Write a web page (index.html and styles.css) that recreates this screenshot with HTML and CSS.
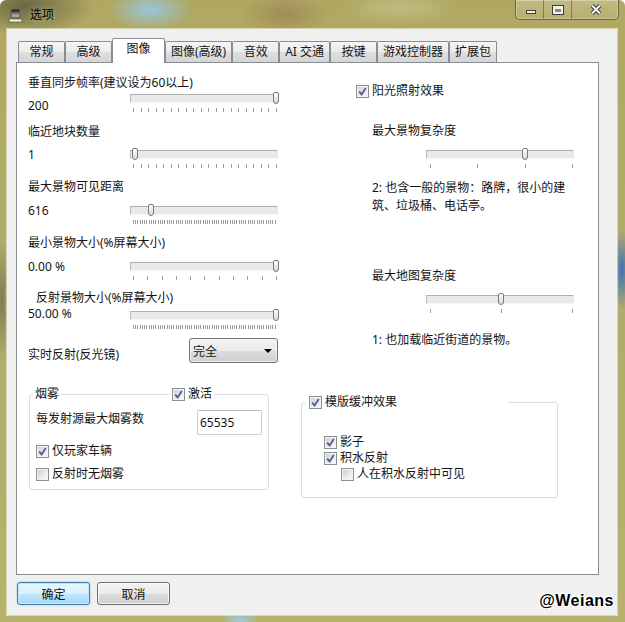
FILE: index.html
```html
<!DOCTYPE html>
<html lang="zh-CN">
<head>
    <meta charset="UTF-8">
    <title>选项</title>
    <link rel="stylesheet" href="styles.css">
</head>
<body>
    <div class="window">
        <div class="titlebar">
            <svg class="app-icon" width="15" height="15" viewBox="0 0 15 15">
                <rect x="3" y="1" width="9" height="4" rx="2" fill="#3b3b36"/>
                <rect x="2" y="4" width="11" height="6" rx="1" fill="#6d6b60"/>
                <rect x="4" y="6" width="7" height="3" fill="#a8a494"/>
                <rect x="1" y="11" width="13" height="3" fill="#f4f4ef" stroke="#55544c" stroke-width="0.8"/>
            </svg>
            <span class="title">选项</span>
            <div class="caption-buttons">
                <div class="cap-btn cap-min">
                    <svg width="27" height="19"><rect x="10.5" y="10.5" width="9" height="3" fill="#f2f2f2" stroke="#3c3c3c"/></svg>
                </div>
                <div class="cap-btn cap-max">
                    <svg width="27" height="19">
                        <rect x="8" y="5" width="12" height="10" fill="#3c3c3c"/>
                        <rect x="9" y="6" width="10" height="8" fill="#f2f2f2"/>
                        <rect x="11" y="9" width="6" height="3" fill="#8f8c63"/>
                    </svg>
                </div>
                <div class="cap-btn cap-close">
                    <svg width="46" height="19">
                        <path d="M20 5.5L28 13.5M28 5.5L20 13.5" stroke="#3c3c3c" stroke-width="4"/>
                        <path d="M20 5.5L28 13.5M28 5.5L20 13.5" stroke="#f2f2f2" stroke-width="2"/>
                    </svg>
                </div>
            </div>
        </div>

        <div class="client">
            <div class="tabs">
                <div class="tab">常规</div>
                <div class="tab">高级</div>
                <div class="tab active">图像</div>
                <div class="tab">图像(高级)</div>
                <div class="tab">音效</div>
                <div class="tab">AI 交通</div>
                <div class="tab">按键</div>
                <div class="tab">游戏控制器</div>
                <div class="tab">扩展包</div>
            </div>

            <div class="panel">
                <div class="columns">
                    <div class="col-left">
                        <div class="field first">
                            <div class="field-label">垂直同步帧率(建议设为60以上)</div>
                            <div class="field-row">
                                <span class="value">200</span>
                                <div class="slider">
                                    <div class="track"></div>
                                    <div class="thumb" style="left: 143px"></div>
                                    <div class="ticks"><i></i><i></i><i></i><i></i><i></i><i></i><i></i><i></i><i></i><i></i><i></i><i></i><i></i><i></i><i></i><i></i><i></i><i></i><i></i><i></i></div>
                                </div>
                            </div>
                        </div>

                        <div class="field">
                            <div class="field-label">临近地块数量</div>
                            <div class="field-row">
                                <span class="value">1</span>
                                <div class="slider">
                                    <div class="track"></div>
                                    <div class="thumb" style="left: 2px"></div>
                                    <div class="ticks"><i></i><i></i><i></i><i></i><i></i><i></i><i></i><i></i><i></i><i></i><i></i><i></i><i></i><i></i><i></i><i></i><i></i><i></i><i></i><i></i></div>
                                </div>
                            </div>
                        </div>

                        <div class="field">
                            <div class="field-label">最大景物可见距离</div>
                            <div class="field-row">
                                <span class="value">616</span>
                                <div class="slider">
                                    <div class="track"></div>
                                    <div class="thumb" style="left: 18px"></div>
                                    <div class="ticks dense"></div>
                                </div>
                            </div>
                        </div>

                        <div class="field">
                            <div class="field-label">最小景物大小(%屏幕大小)</div>
                            <div class="field-row">
                                <span class="value">0.00 %</span>
                                <div class="slider">
                                    <div class="track"></div>
                                    <div class="thumb" style="left: 143px"></div>
                                    <div class="ticks"><i></i><i></i><i></i><i></i><i></i><i></i><i></i><i></i><i></i><i></i><i></i></div>
                                </div>
                            </div>
                        </div>

                        <div class="field tight">
                            <div class="field-label indent">反射景物大小(%屏幕大小)</div>
                            <div class="field-row">
                                <span class="value">50.00 %</span>
                                <div class="slider">
                                    <div class="track"></div>
                                    <div class="thumb" style="left: 143px"></div>
                                    <div class="ticks dense"></div>
                                </div>
                            </div>
                        </div>

                        <div class="select-row">
                            <span class="select-label">实时反射(反光镜)</span>
                            <div class="dropdown">
                                <span>完全</span>
                                <svg width="8" height="4"><path d="M0 0H8L4 4Z" fill="#000"/></svg>
                            </div>
                        </div>
                    </div>

                    <div class="col-right">
                        <div class="check">
                            <span class="cb checked"><svg width="11" height="11"><path d="M2.2 5.6L4.6 8.4L8.8 2" fill="none" stroke="#4b5d97" stroke-width="1.8"/></svg></span>
                            <span>阳光照射效果</span>
                        </div>

                        <div class="right-label first">最大景物复杂度</div>
                        <div class="slider wide">
                            <div class="track"></div>
                            <div class="thumb" style="left: 96px"></div>
                            <div class="ticks"><i></i><i></i><i></i><i></i></div>
                        </div>
                        <div class="desc">2: 也含一般的景物<span class="punct">：</span>路牌<span class="punct">，</span>很小的建<br>筑、垃圾桶、电话亭。</div>

                        <div class="right-label second">最大地图复杂度</div>
                        <div class="slider wide">
                            <div class="track"></div>
                            <div class="thumb" style="left: 72px"></div>
                            <div class="ticks"><i></i><i></i><i></i></div>
                        </div>
                        <div class="desc last">1: 也加载临近街道的景物。</div>
                    </div>
                </div>

                <div class="groups">
                    <div class="group smoke">
                        <div class="group-caption">烟雾</div>
                        <div class="group-caption activate">
                            <span class="cb checked"><svg width="11" height="11"><path d="M2.2 5.6L4.6 8.4L8.8 2" fill="none" stroke="#4b5d97" stroke-width="1.8"/></svg></span>
                            <span>激活</span>
                        </div>
                        <div class="smoke-row">
                            <span class="smoke-label">每发射源最大烟雾数</span>
                            <div class="textbox">65535</div>
                        </div>
                        <div class="check spaced">
                            <span class="cb checked"><svg width="11" height="11"><path d="M2.2 5.6L4.6 8.4L8.8 2" fill="none" stroke="#4b5d97" stroke-width="1.8"/></svg></span>
                            <span>仅玩家车辆</span>
                        </div>
                        <div class="check spaced2">
                            <span class="cb"></span>
                            <span>反射时无烟雾</span>
                        </div>
                    </div>

                    <div class="group stencil">
                        <div class="group-caption stencil-caption">
                            <span class="cb checked"><svg width="11" height="11"><path d="M2.2 5.6L4.6 8.4L8.8 2" fill="none" stroke="#4b5d97" stroke-width="1.8"/></svg></span>
                            <span>模版缓冲效果</span>
                        </div>
                        <div class="check">
                            <span class="cb checked"><svg width="11" height="11"><path d="M2.2 5.6L4.6 8.4L8.8 2" fill="none" stroke="#4b5d97" stroke-width="1.8"/></svg></span>
                            <span>影子</span>
                        </div>
                        <div class="check">
                            <span class="cb checked"><svg width="11" height="11"><path d="M2.2 5.6L4.6 8.4L8.8 2" fill="none" stroke="#4b5d97" stroke-width="1.8"/></svg></span>
                            <span>积水反射</span>
                        </div>
                        <div class="check sub">
                            <span class="cb"></span>
                            <span>人在积水反射中可见</span>
                        </div>
                    </div>
                </div>
            </div>

            <div class="buttons">
                <div class="btn default">确定</div>
                <div class="btn">取消</div>
            </div>
        </div>

        <div class="watermark">@Weians</div>
    </div>
</body>
</html>
```

FILE: styles.css
```css
* {
    box-sizing: border-box;
}
body {
    margin: 0;
    font-family: "Noto Sans", "Noto Sans CJK SC", sans-serif;
    font-size: 12px;
    color: #141414;
}
.window {
    position: relative;
    width: 625px;
    height: 622px;
    display: flex;
    flex-direction: column;
    border-radius: 6px 6px 0 0;
    background:
        radial-gradient(ellipse 42px 20px at 150px 10px, rgba(150,200,228,.95), rgba(150,200,228,0)),
        radial-gradient(ellipse 70px 30px at 25px 6px, rgba(96,90,62,.85), rgba(96,90,62,0)),
        radial-gradient(ellipse 45px 22px at 285px 14px, rgba(150,122,80,.6), rgba(150,122,80,0)),
        radial-gradient(ellipse 60px 18px at 400px 8px, rgba(200,198,140,.7), rgba(200,198,140,0)),
        radial-gradient(ellipse 18px 8px at 240px 620px, rgba(150,205,235,.95), rgba(150,205,235,0)),
        radial-gradient(ellipse 10px 40px at 622px 270px, rgba(50,105,190,.9), rgba(50,105,190,0)),
        radial-gradient(ellipse 8px 60px at 2px 300px, rgba(110,100,70,.7), rgba(110,100,70,0)),
        linear-gradient(to bottom, #b0a862 0%, #b2ac6c 50%, #b7b16d 100%);
}
.titlebar {
    display: flex;
    align-items: flex-start;
    height: 29px;
    padding: 0 6px 0 8px;
}
.app-icon {
    margin-top: 8px;
}
.title {
    margin: 7px 0 0 7px;
    line-height: 16px;
    color: #000;
    text-shadow: 0 0 6px rgba(255,255,255,.5);
}
.caption-buttons {
    display: flex;
    margin-left: auto;
    height: 20px;
    border: 1px solid rgba(60,58,30,.6);
    border-top: none;
    border-radius: 0 0 5px 5px;
    overflow: hidden;
    box-shadow: inset 0 0 0 1px rgba(255,255,255,.3);
}
.cap-btn {
    height: 19px;
    background: linear-gradient(rgba(255,255,255,.22), rgba(255,255,255,.08));
}
.cap-min, .cap-max {
    width: 28px;
    border-right: 1px solid rgba(60,58,30,.45);
}
.cap-close {
    width: 46px;
}
.client {
    flex: 1;
    margin: 0 8px 7px 7px;
    padding: 9px 0 0 9px;
    background: #f0f0f0;
    box-shadow: 0 0 0 1px rgba(255,255,255,.5);
}
.tabs {
    position: relative;
    z-index: 1;
    display: flex;
    align-items: flex-end;
    height: 25px;
    margin-bottom: -1px;
    padding-left: 2px;
}
.tab {
    min-width: 47px;
    height: 21px;
    margin-bottom: 1px;
    padding: 2px 5px 0;
    line-height: 16px;
    text-align: center;
    white-space: nowrap;
    border: 1px solid #898c95;
    border-bottom: none;
    border-radius: 2px 2px 0 0;
    background: linear-gradient(#f5f5f5, #ebebeb 50%, #dfdfdf 51%, #d5d5d5);
}
.tab.active {
    min-width: 53px;
    height: 25px;
    margin-bottom: 0;
    background: #fff;
}
.panel {
    width: 583px;
    height: 513px;
    padding: 12px 0 0 11px;
    border: 1px solid #898c95;
    background: #fff;
}
.columns {
    display: grid;
    grid-template-columns: 250px 224px;
    column-gap: 78px;
    align-items: start;
}
.field {
    margin-top: 11px;
}
.field.first {
    margin-top: 0;
}
.field:nth-child(2) {
    margin-top: 12px;
}
.field.tight {
    margin-top: 10px;
}
.field-label {
    line-height: 16px;
    white-space: nowrap;
}
.field-label.indent {
    padding-left: 8px;
}
.field-row {
    display: grid;
    grid-template-columns: 102px 148px;
    align-items: start;
    margin-top: 11px;
}
.field:nth-child(2) .field-row {
    margin-top: 10px;
}
.field.first .field-row {
    margin-top: 3px;
}
.field.tight .field-row {
    margin-top: 5px;
}
.value {
    line-height: 12px;
    margin-top: -1px;
}
.field.first .value {
    margin-top: 6px;
}
.field.tight .value {
    margin-top: -3px;
}
.slider {
    position: relative;
    width: 148px;
    height: 18px;
}
.slider.wide {
    margin: 11px 0 0 70px;
}
.track {
    height: 9px;
    background: #e7eaea;
    border-top: 1px solid #b0b0b0;
    border-left: 1px solid #bcbcbc;
    border-bottom: 1px solid #f6f6f6;
    border-right: 1px solid #e9e9e9;
}
.thumb {
    position: absolute;
    top: -2px;
    width: 6px;
    height: 12px;
    border: 1px solid #7a7a7a;
    border-radius: 2px 2px 3px 3px;
    background: linear-gradient(#fdfdfd, #d9d9d9);
}
.ticks {
    display: flex;
    justify-content: space-between;
    width: 144px;
    height: 4px;
    margin: 5px 0 0 3px;
}
.slider.wide .ticks {
    width: 143px;
    margin-left: 4px;
}
.ticks i {
    width: 1px;
    height: 4px;
    background: #9c9c9c;
}
.ticks.dense {
    background: repeating-linear-gradient(90deg, #9c9c9c 0 1px, transparent 1px 2.25px);
}
.select-row {
    display: flex;
    align-items: flex-start;
    margin-top: 9px;
}
.select-label {
    width: 161px;
    padding-top: 9px;
    line-height: 16px;
}
.dropdown {
    display: flex;
    align-items: center;
    justify-content: space-between;
    width: 89px;
    height: 25px;
    padding: 0 5px 0 3px;
    border: 1px solid #707070;
    border-radius: 3px;
    background: linear-gradient(#f2f2f2, #ebebeb 50%, #dddddd 51%, #cfcfcf);
    box-shadow: inset 0 0 0 1px rgba(255,255,255,.6);
}
.col-right {
    padding-top: 8px;
}
.check {
    display: flex;
    align-items: center;
    gap: 3px;
    line-height: 16px;
    white-space: nowrap;
}
.cb {
    display: inline-flex;
    align-items: center;
    justify-content: center;
    width: 13px;
    height: 13px;
    border: 1px solid #8e8f8f;
    background: linear-gradient(135deg, #c9cacc 0%, #ececed 60%, #fafafa 100%);
    box-shadow: inset 0 0 0 1px #f4f4f4;
}
.right-label {
    padding-left: 16px;
    line-height: 16px;
}
.right-label.first {
    margin-top: 24px;
}
.right-label.second {
    margin-top: 53px;
}
.desc {
    margin-top: 10px;
    padding-left: 16px;
    line-height: 18px;
    white-space: nowrap;
}
.desc .punct {
    font-family: "Noto Sans CJK TC", sans-serif;
}
.desc.last {
    margin-top: 18px;
}
.groups {
    display: flex;
    align-items: flex-start;
    gap: 32px;
    margin-top: 31px;
    padding-left: 1px;
}
.group {
    position: relative;
    border: 1px solid #d5dfe5;
    border-radius: 3px;
}
.group.smoke {
    width: 240px;
    padding: 15px 6px 7px;
}
.group.stencil {
    width: 257px;
    margin-top: 8px;
    padding: 31px 8px 15px 22px;
}
.group-caption {
    position: absolute;
    top: -9px;
    left: 3px;
    display: flex;
    align-items: center;
    gap: 3px;
    padding: 0 2px;
    line-height: 16px;
    background: #fff;
}
.group-caption.activate {
    left: 140px;
}
.group-caption.stencil-caption {
    width: 203px;
    padding-left: 4px;
}
.smoke-row {
    display: flex;
    justify-content: space-between;
    align-items: flex-start;
}
.smoke-label {
    padding-top: 1px;
    line-height: 16px;
}
.textbox {
    width: 65px;
    height: 25px;
    padding-left: 2px;
    line-height: 23px;
    border: 1px solid #c8cfd7;
    border-top-color: #b4bac2;
    border-radius: 2px;
    background: #fff;
}
.check.spaced {
    margin-top: 8px;
}
.check.spaced2 {
    margin-top: 7px;
}
.check.sub {
    padding-left: 17px;
}
.buttons {
    display: flex;
    gap: 7px;
    margin-top: 7px;
    padding-left: 1px;
}
.btn {
    display: flex;
    align-items: center;
    justify-content: center;
    width: 73px;
    height: 23px;
    border: 1px solid #707070;
    border-radius: 3px;
    background: linear-gradient(#f2f2f2, #ebebeb 50%, #dddddd 51%, #cfcfcf);
    box-shadow: inset 0 0 0 1px rgba(255,255,255,.7);
}
.btn.default {
    border-color: #3c7fb1;
    background: linear-gradient(#eaf6fd, #d9f0fc 50%, #bee6fd 51%, #a7d9f5);
    box-shadow: inset 0 0 0 1px #c5e6fa, 0 0 2px rgba(60,160,230,.6);
}
.watermark {
    position: absolute;
    top: 592px;
    right: 11px;
    font-family: "Liberation Sans", sans-serif;
    font-size: 16px;
    font-weight: bold;
    line-height: 18px;
    letter-spacing: .5px;
    color: #000;
    text-shadow: 1px 0 #fff, -1px 0 #fff, 0 1px #fff, 0 -1px #fff, 1px 1px #fff, -1px -1px #fff, 1px -1px #fff, -1px 1px #fff;
}
```
